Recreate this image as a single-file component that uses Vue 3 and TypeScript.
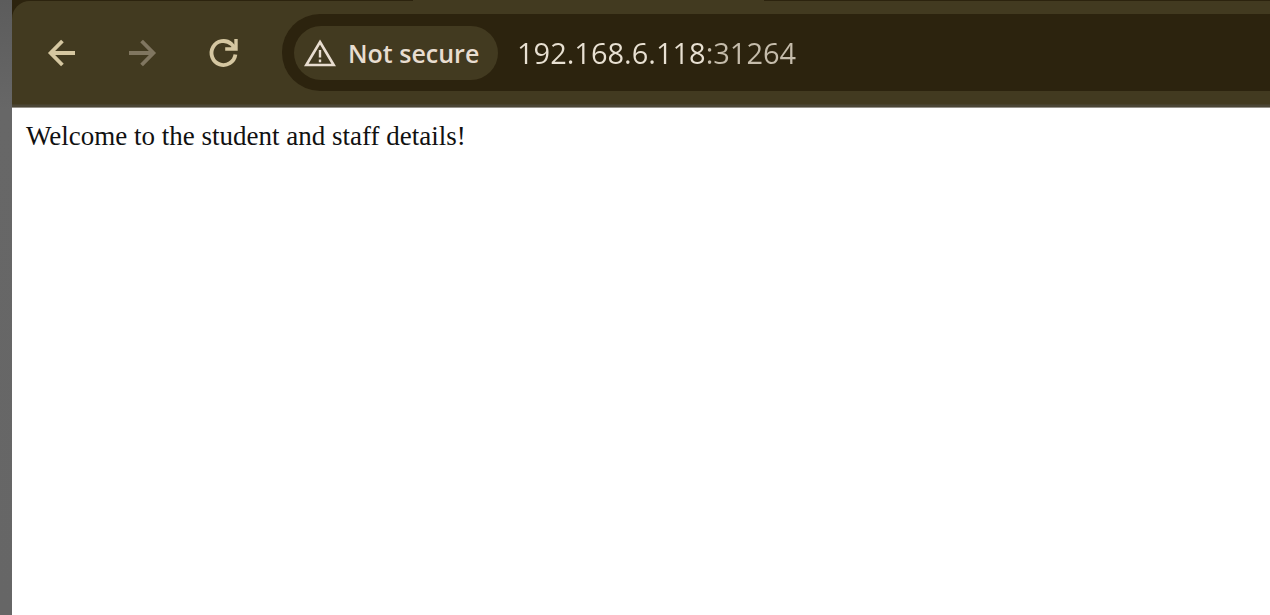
<script setup lang="ts">
import { ref } from 'vue'

const address = ref<string>('192.168.6.118:31264')
const message = 'Welcome to the student and staff details!'
</script>

<template>
  <div class="desktop">
    <div class="window">
      <header class="chrome">
        <div class="tabs"><span class="tab"></span></div>
        <nav class="toolbar" aria-label="Browser toolbar">
          <button class="nav" type="button" aria-label="Back">
            <svg viewBox="0 0 32 32" fill="none" stroke="currentColor" stroke-width="3.8">
              <path d="M29 16H5M16.4 4 4.6 16l11.8 12" />
            </svg>
          </button>
          <button class="nav" type="button" aria-label="Forward" disabled>
            <svg viewBox="0 0 32 32" fill="none" stroke="currentColor" stroke-width="3.8">
              <path d="M2 16H26M14.6 4 26.4 16 14.6 28" />
            </svg>
          </button>
          <button class="nav" type="button" aria-label="Reload">
            <svg viewBox="0 0 32 32" fill="none" stroke="currentColor" stroke-width="3.8">
              <path d="M27.4 17.6A12 12 0 1 1 23.4 7L27 11" />
              <path d="M28 2V12H17.2" stroke-width="3.4" />
              <path d="M27 7.5V11H22.5Z" fill="currentColor" stroke="none" />
            </svg>
          </button>
          <div class="omnibox">
            <button class="security" type="button">
              <svg viewBox="0 0 32 28" fill="none" stroke="currentColor" stroke-width="2.6">
                <path d="M16 3 29.7 26H2.3Z" />
                <path d="M16 11v7.4M16 20.4v2.8" stroke-width="2.4" />
              </svg>
              <span>Not secure</span>
            </button>
            <input v-model="address" class="address" type="text" aria-label="Address" spellcheck="false" />
          </div>
        </nav>
      </header>
      <main class="page">{{ message }}</main>
    </div>
  </div>
</template>

<style>
body {
  margin: 0;
}
</style>

<style scoped>
.desktop {
  box-sizing: border-box;
  min-height: 100vh;
  padding-left: 12px;
  background: linear-gradient(#5c5c5c, #676767 110px, #666666);
  display: flex;
}
.window {
  flex: 1;
  min-width: 0;
  display: flex;
  flex-direction: column;
  background: #ffffff;
}
.chrome {
  background: #2c230e;
}
.tabs {
  height: 1px;
  display: flex;
  padding-left: 401px;
}
.tab {
  width: 351px;
  background: #423a20;
}
.toolbar {
  box-sizing: border-box;
  height: 107px;
  display: flex;
  align-items: center;
  padding: 0 0 3px 34px;
  background: linear-gradient(#423a20 103px, #4b4636 104px);
  border-bottom: 1px solid #96928a;
  border-top-left-radius: 18px;
}
button {
  border: 0;
  padding: 0;
  font: inherit;
}
.nav {
  width: 32px;
  height: 32px;
  margin-right: 49px;
  background: none;
  color: #d5c7a1;
}
.nav:disabled {
  color: #807660;
}
.nav svg {
  display: block;
  width: 32px;
  height: 32px;
}
.omnibox {
  box-sizing: border-box;
  flex: 1;
  min-width: 0;
  height: 77px;
  margin-left: -7px;
  padding-left: 12px;
  display: flex;
  align-items: center;
  gap: 19px;
  background: #2c230e;
  border-radius: 38px 0 0 38px;
  font-family: "Open Sans", "Noto Sans", sans-serif;
}
.security {
  flex: none;
  box-sizing: border-box;
  width: 204px;
  height: 54px;
  padding-left: 10px;
  display: flex;
  align-items: center;
  gap: 12px;
  border-radius: 27px;
  background: #423a20;
  color: #e8ddd0;
  font-size: 25px;
  font-weight: 600;
  white-space: nowrap;
}
.security svg {
  width: 32px;
  height: 28px;
}
.address {
  flex: 1;
  min-width: 0;
  height: 48px;
  border: 0;
  outline: 0;
  padding: 0;
  box-sizing: border-box;
  font: inherit;
  font-size: 29px;
  color: transparent;
  caret-color: #e8e0d2;
  background: linear-gradient(90deg, #e8e0d2 190px, #c5bcab 190px);
  -webkit-background-clip: text;
  background-clip: text;
}
.page {
  padding: 12px 14px;
  font-family: "Liberation Serif", "Times New Roman", serif;
  font-size: 27px;
  line-height: 32px;
  color: #111111;
}
</style>
